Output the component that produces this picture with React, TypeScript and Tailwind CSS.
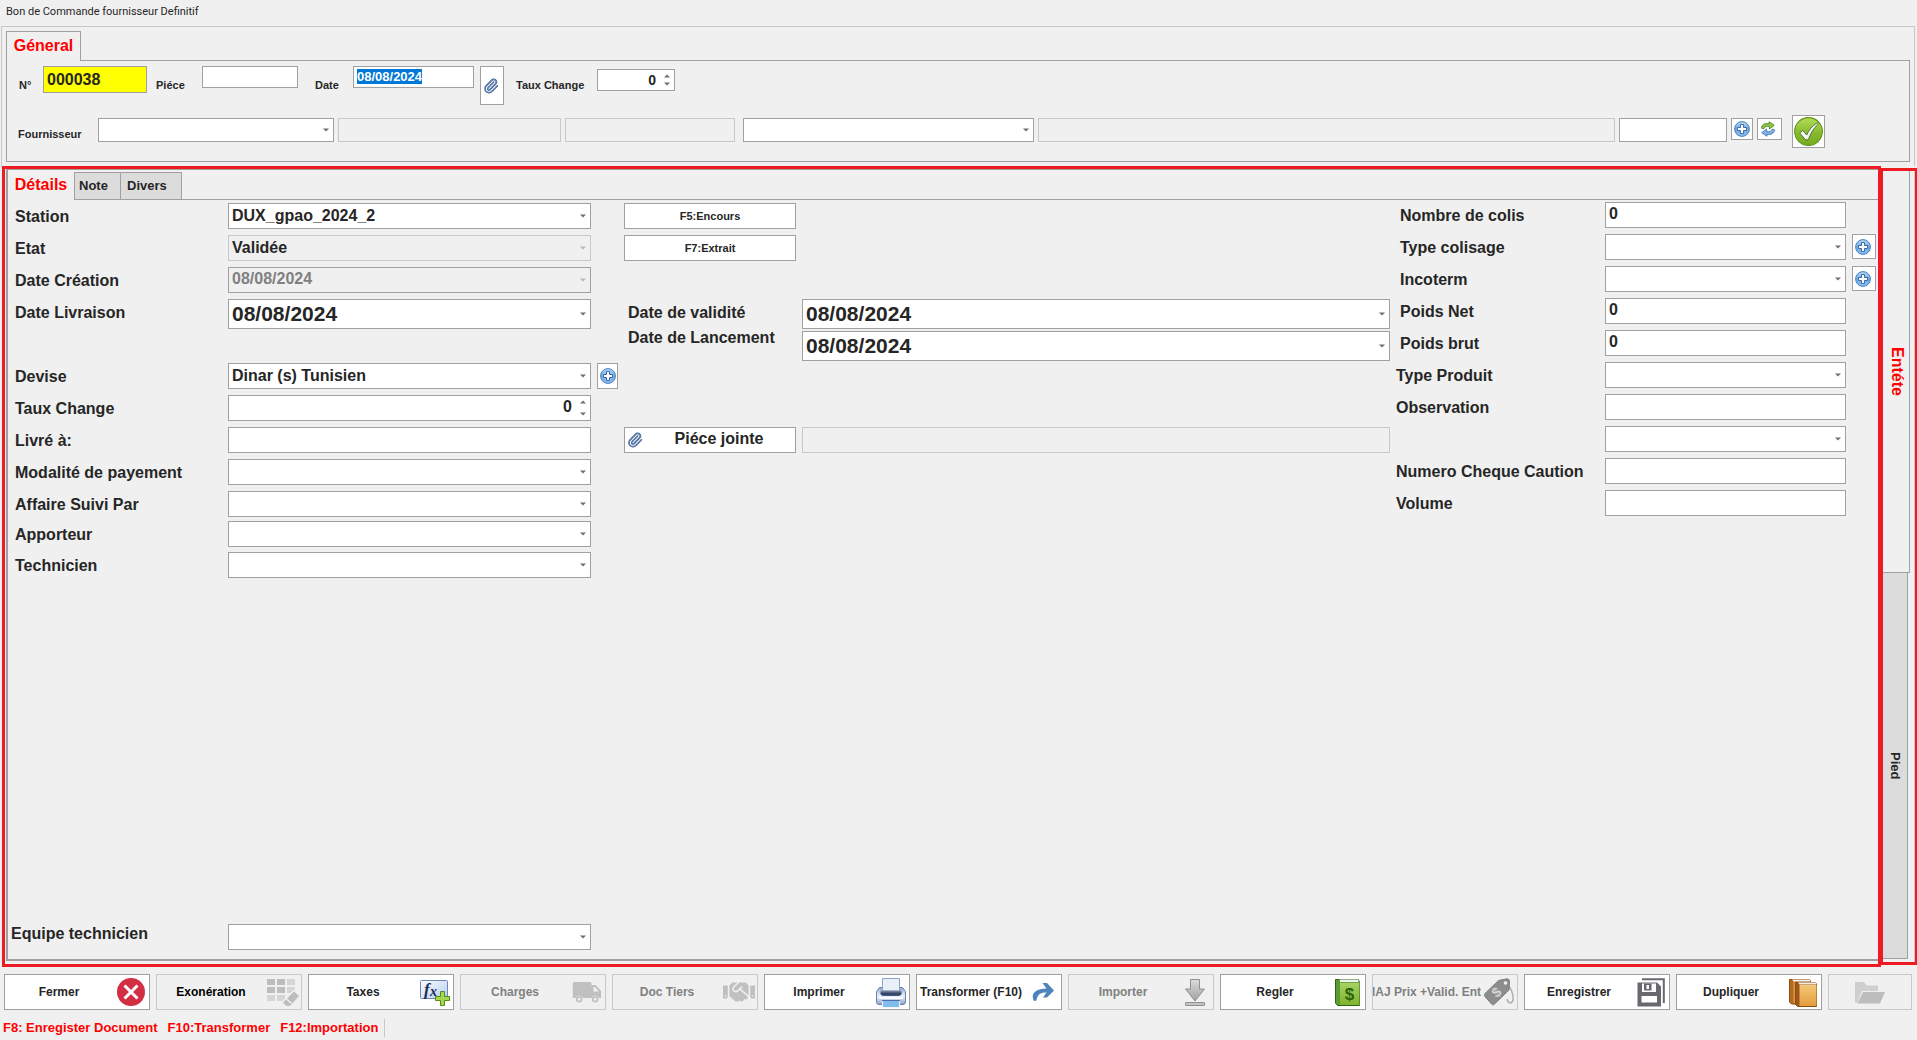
import { useEffect, useRef, type ReactNode } from "react";
import { Paperclip as ClipGlyph } from "lucide-react";
import { FaHandshake } from "react-icons/fa";

/* ---------- icons ---------- */

function Paperclip() {
  return (
    <span className="relative block size-4 shrink-0">
      <ClipGlyph className="size-4 text-[#2f558f]" strokeWidth={2.4} aria-hidden="true" />
      <ClipGlyph className="absolute inset-0 size-4 text-[#b4c8e6]" strokeWidth={0.7} aria-hidden="true" />
    </span>
  );
}

function PlusCircle() {
  return (
    <svg viewBox="0 0 16 16" className="size-4 shrink-0" aria-hidden="true">
      <defs>
        <linearGradient id="plusFill" x1="0" y1="0" x2="0" y2="1">
          <stop offset="0" stopColor="#b9dcf5" />
          <stop offset="0.5" stopColor="#6fa8dc" />
          <stop offset="1" stopColor="#8cc4f0" />
        </linearGradient>
      </defs>
      <circle cx="8" cy="8" r="7.4" fill="url(#plusFill)" stroke="#4a7dbf" />
      <path d="M6.500 3.500h3v3h3v3h-3v3h-3v-3h-3v-3h3z" fill="#fff" stroke="#2f5fa5" strokeWidth="0.9" strokeLinejoin="round" />
    </svg>
  );
}

function Refresh() {
  return (
    <svg viewBox="0 0 16 16" className="size-4 shrink-0" strokeLinejoin="round" strokeWidth="0.8" aria-hidden="true">
      <path d="M1.500 7.200C1.700 3.800 5 1.700 9 2.800V.7l5.300 3.600L9.400 8V5.700C6.700 4.700 4.600 5.500 3.800 7.800z" fill="#8cc63f" stroke="#4b7d1a" />
      <path d="M14.500 8.800c-.2 3.400-3.500 5.500-7.500 4.400v2.100L1.700 11.700 6.600 8v2.300c2.700 1 4.800.2 5.600-2.100z" fill="#7db4e6" stroke="#3a6fb0" />
    </svg>
  );
}

function CheckCircle() {
  return (
    <svg viewBox="0 0 28 28" className="size-[29px] shrink-0" aria-hidden="true">
      <defs>
        <linearGradient id="checkFill" x1="0" y1="0" x2="0" y2="1">
          <stop offset="0" stopColor="#b5dc5a" />
          <stop offset="0.55" stopColor="#86bb2c" />
          <stop offset="1" stopColor="#76ab22" />
        </linearGradient>
      </defs>
      <circle cx="14" cy="14" r="13.4" fill="url(#checkFill)" stroke="#5f931a" />
      <path
        d="M5.500 15.500 8.500 13l3.800 4.400C14.300 12.700 17.600 8.500 22.500 5.500l1 1.200c-4.500 4-7.500 8.800-9.700 15.300h-2.600z"
        fill="#f4f8f0"
        stroke="#4f6b3a"
        strokeWidth="0.9"
        strokeLinejoin="round"
      />
    </svg>
  );
}

function CloseIcon() {
  return (
    <svg viewBox="0 0 28 28" className="size-7" aria-hidden="true">
      <circle cx="14" cy="14" r="14" fill="#d22f45" />
      <path d="m7.500 7.500 13 13m0-13-13 13" stroke="#fff" strokeWidth="3" />
    </svg>
  );
}

function GridEraser() {
  return (
    <svg viewBox="0 0 34 30" className="h-[30px] w-[34px]" aria-hidden="true">
      <g fill="#bdbdbd">
        <path d="M1 2h8v6H1zM11 2h8v6h-8zM1 10h8v6H1zM11 10h8v6h-8z" />
      </g>
      <g fill="#d6d6d6">
        <path d="M21 2h8v6h-8zM21 10h8v6h-8zM1 18h8v6H1zM11 18h8v6h-8z" />
      </g>
      <path d="m28 13.500 6 5.500-9.500 10.500h-4.500l-4-4z" fill="#bdbdbd" stroke="#f0f0f0" strokeWidth="1.5" />
      <path d="m19.500 21 6 5.500" stroke="#f0f0f0" strokeWidth="1.5" />
    </svg>
  );
}

function FormulaIcon() {
  return (
    <svg viewBox="0 0 32 30" className="h-[30px] w-8" aria-hidden="true">
      <defs>
        <linearGradient id="fxFill" x1="0" y1="0" x2="1" y2="1">
          <stop offset="0" stopColor="#fbfdff" />
          <stop offset="1" stopColor="#b4cdf2" />
        </linearGradient>
      </defs>
      <rect x="1.5" y="3.5" width="27" height="18" rx="1" fill="url(#fxFill)" stroke="#6e87b5" />
      <text x="5" y="18" fontSize="17" fontStyle="italic" fontWeight="bold" fontFamily="Liberation Serif, serif" fill="#1c2b50">
        f
      </text>
      <text x="11" y="19" fontSize="14" fontStyle="italic" fontWeight="bold" fontFamily="Liberation Serif, serif" fill="#1c2b50">
        x
      </text>
      <path d="M21.500 14.500h4v5h5v4h-5v5h-4v-5h-5v-4h5z" fill="#a8d84a" stroke="#4f8a1a" strokeLinejoin="round" />
    </svg>
  );
}

function Truck() {
  return (
    <svg viewBox="0 0 30 22" className="h-[22px] w-[30px]" fill="#c0c0c0" aria-hidden="true">
      <path d="M2 1h16a1.500 1.500 0 0 1 1.500 1.500V4h4.300l5.200 6v7h-2a4 4 0 0 0-7.500 0H11a4 4 0 0 0-7.500 0H.8V2.500A1.500 1.500 0 0 1 2 1zm19.500 5v4.500h5.300L23 6z" fillRule="evenodd" />
      <path d="M7.200 15a3.300 3.300 0 1 1 0 6.600 3.300 3.300 0 0 1 0-6.600zm0 1.800a1.500 1.500 0 1 0 0 3 1.500 1.500 0 0 0 0-3zM23.200 15a3.300 3.300 0 1 1 0 6.600 3.300 3.300 0 0 1 0-6.600zm0 1.800a1.500 1.500 0 1 0 0 3 1.500 1.500 0 0 0 0-3z" fillRule="evenodd" />
    </svg>
  );
}

function Handshake() {
  return <FaHandshake className="size-8 text-[#c0c0c0]" aria-hidden="true" />;
}

function Printer() {
  return (
    <svg viewBox="0 0 30 31" className="h-[31px] w-[30px]" aria-hidden="true">
      <defs>
        <linearGradient id="printBody" x1="0" y1="0" x2="0" y2="1">
          <stop offset="0" stopColor="#8fa6cf" />
          <stop offset="0.5" stopColor="#eef3fb" />
          <stop offset="1" stopColor="#8ba0ca" />
        </linearGradient>
        <linearGradient id="printRoll" x1="0" y1="0" x2="0" y2="1">
          <stop offset="0" stopColor="#8f9cb5" />
          <stop offset="0.6" stopColor="#2c3c60" />
          <stop offset="1" stopColor="#4c5d85" />
        </linearGradient>
      </defs>
      <path d="M3.500 10.500h23l3 4V25c0 1.500-1 2.500-2.500 2.500H3C1.500 27.500.5 26.500.5 25V14.500z" fill="url(#printBody)" stroke="#6a80ad" />
      <path d="M6.500 1.500h17V14h-17z" fill="#e9f0fa" stroke="#8ea3c8" />
      <path d="M4.500 13.500h21v3c0 1.500-1.500 2.500-3 2.500h-15c-1.500 0-3-1-3-2.500z" fill="url(#printRoll)" />
      <path d="M3 20h24v2H3z" fill="#f7faff" />
      <path d="M6.500 23.500h17v7h-17z" fill="#7fbdee" stroke="#f2f6fc" />
      <path d="M6 23.500h18" stroke="#4f6ea5" />
    </svg>
  );
}

function RedoArrow() {
  return (
    <svg viewBox="0 0 22 18" className="h-[18px] w-[22px]" aria-hidden="true">
      <path d="M10.500 0h4.500l7 7.500-7 7h-4l3.500-5C9 9.500 5.500 11 4.500 17.500L2 18C-1.500 12 2 5.500 14.500 5.500z" fill="#4d84bd" />
    </svg>
  );
}

function DownloadArrow() {
  return (
    <svg viewBox="0 0 22 30" className="h-[30px] w-[22px]" stroke="#909090" strokeLinejoin="round" aria-hidden="true">
      <defs>
        <linearGradient id="downFill" x1="0" y1="0" x2="0" y2="1">
          <stop offset="0" stopColor="#dcdcdc" />
          <stop offset="1" stopColor="#a0a0a0" />
        </linearGradient>
      </defs>
      <path d="M6.500 2.500h9V12h5L11 24 1.500 12h5z" fill="url(#downFill)" />
      <rect x="1.5" y="25.5" width="19" height="3" rx="0.5" fill="#c4c4c4" />
    </svg>
  );
}

function MoneyBook() {
  return (
    <svg viewBox="0 0 25 28" className="h-7 w-[25px]" aria-hidden="true">
      <defs>
        <linearGradient id="bookGreen" x1="0" y1="0" x2="0" y2="1">
          <stop offset="0" stopColor="#a7d264" />
          <stop offset="1" stopColor="#7fb52e" />
        </linearGradient>
      </defs>
      <path d="M.5 1.500h23l1 3v23H2.500l-2-2.500z" fill="#3f7a22" stroke="#2f6318" />
      <path d="M4 1.500h19.500V4H5z" fill="#eef3f4" />
      <path d="M1 2h4v25H2.500L1 25z" fill="#5c9a34" />
      <path d="M5 4.500h19.500V27H5z" fill="url(#bookGreen)" />
      <text x="14.5" y="22" textAnchor="middle" fontSize="17" fontWeight="bold" fontFamily="Liberation Sans, sans-serif" fill="#2b6410">
        $
      </text>
    </svg>
  );
}

function PriceTag() {
  return (
    <svg viewBox="0 0 30 28" className="h-7 w-[30px]" aria-hidden="true">
      <path d="M22 6c4 2 8 10 7 16-1 4-5 4-6-1" fill="none" stroke="#b0b0b0" strokeWidth="1.5" />
      <path d="M14.500 2.500 23 .8c1.500 0 2.500 1 2.500 2.500L25 12 10.500 26c-1 1-2 1-3 0L1 18.500c-1-1-1-2 0-3z" fill="#8d8d8d" stroke="#7c7c7c" />
      <circle cx="21.5" cy="5" r="1.8" fill="#f0f0f0" />
      <text x="12.5" y="19" textAnchor="middle" fontSize="14" fontWeight="bold" fontFamily="Liberation Sans, sans-serif" fill="#d4d4d4" transform="rotate(-40 12.5 14.5)">
        $
      </text>
    </svg>
  );
}

function SaveAll() {
  return (
    <svg viewBox="0 0 28 29" className="h-[29px] w-7" aria-hidden="true">
      <path d="M5 1.200h21.800V25" fill="none" stroke="#68686f" strokeWidth="2" />
      <path d="M.5 4.500H20l4 4V28.500H.5zM5 5.500v8.500h14V5.500zM4.500 18v6.500h15.500V18z" fill="#68686f" fillRule="evenodd" />
      <path d="M7 5.500h7.500v7H7zM9.500 7v4h2.500V7z" fill="#68686f" fillRule="evenodd" />
    </svg>
  );
}

function Books() {
  return (
    <svg viewBox="0 0 28 29" className="h-[29px] w-7" aria-hidden="true">
      <defs>
        <linearGradient id="bookGold" x1="0" y1="0" x2="0" y2="1">
          <stop offset="0" stopColor="#f3c878" />
          <stop offset="1" stopColor="#e39c3c" />
        </linearGradient>
      </defs>
      <path d="M.5 1.500h20l1 2V26H2.500L.5 24z" fill="#b56a1f" stroke="#8d4c12" />
      <path d="M3 1.500h18v2H4.500z" fill="#f4efe8" />
      <path d="M4.500 4H21v21H4.500z" fill="#dd9a45" />
      <path d="M6.500 4.500h20l1 2v22h-19l-2-2z" fill="#a0551a" stroke="#8d4c12" />
      <path d="M9 4.500h18v2H10.500z" fill="#f4efe8" />
      <path d="M10.500 7h17v21h-17z" fill="url(#bookGold)" />
    </svg>
  );
}

function FolderOpen() {
  return (
    <svg viewBox="0 0 30 23" className="h-[23px] w-[30px]" aria-hidden="true">
      <path d="M0 1h9l2.500 3.500H23V10H7L2.500 22H0z" fill="#cfcfcf" />
      <path d="M8 11h22l-5 11.500H2.500z" fill="#bdbdbd" />
    </svg>
  );
}

/* ---------- fields ---------- */

type FieldSkin = "normal" | "readonly" | "disabled";

const skins: Record<FieldSkin, string> = {
  normal: "border-[#a0a0a0] bg-white text-[#262626]",
  readonly: "border-[#a0a0a0] bg-[#f0f0f0] text-[#808080]",
  disabled: "border-[#c8c8c8] bg-[#f0f0f0] text-[#262626]",
};

function Arrow({ faded = false, up = false }: { faded?: boolean; up?: boolean }) {
  return (
    <svg viewBox="0 0 6 4" className="h-1 w-1.5" fill={faded ? "#b8b8b8" : "#6e6e6e"} aria-hidden="true">
      <path d={up ? "M0 3.500 3 .5l3 3z" : "M0 .5h6l-3 3z"} />
    </svg>
  );
}

interface FieldProps {
  id: string;
  value?: string;
  label?: string;
  skin?: FieldSkin;
  size?: string;
}

const fieldBase = "block w-full border pl-[3px] outline-none";

function TextField({ id, value = "", label, skin = "normal", size = "h-[26px] text-[16px] pb-0.5" }: FieldProps) {
  return (
    <input
      id={id}
      aria-label={label}
      defaultValue={value}
      readOnly={skin !== "normal"}
      className={`${fieldBase} ${skins[skin]} ${size}`}
    />
  );
}

function SelectField({ id, value = "", label, skin = "normal", size = "h-[26px] text-[16px] pb-1" }: FieldProps) {
  return (
    <div className="relative w-full">
      <select
        id={id}
        aria-label={label}
        defaultValue={value}
        disabled={skin !== "normal"}
        className={`${fieldBase} appearance-none rounded-none opacity-100 ${skins[skin]} ${size}`}
      >
        <option value={value}>{value}</option>
      </select>
      <span className="pointer-events-none absolute inset-y-0 right-[5px] flex items-center">
        <Arrow faded={skin !== "normal"} />
      </span>
    </div>
  );
}

function DateField({ id, value = "", skin = "normal", size = "h-[30px] text-[21px]" }: FieldProps) {
  return (
    <div className="relative w-full">
      <TextField id={id} value={value} skin={skin} size={size} />
      <button type="button" aria-label="Ouvrir le calendrier" className="absolute inset-y-0 right-[5px] flex items-center">
        <Arrow faded={skin !== "normal"} />
      </button>
    </div>
  );
}

function SpinField({ id, value = "0", size = "h-[26px] text-[16px] pb-0.5" }: FieldProps) {
  return (
    <div className="relative w-full">
      <input id={id} defaultValue={value} inputMode="decimal" className={`${fieldBase} pr-[18px] text-right ${skins.normal} ${size}`} />
      <span className="absolute inset-y-0 right-[5px] flex flex-col justify-between py-[5px]">
        <button type="button" aria-label="Augmenter" className="block">
          <Arrow up />
        </button>
        <button type="button" aria-label="Diminuer" className="block">
          <Arrow />
        </button>
      </span>
    </div>
  );
}

function IconButton({ label, className, children }: { label: string; className: string; children: ReactNode }) {
  return (
    <button type="button" aria-label={label} className={`flex shrink-0 items-center justify-center border border-[#a0a0a0] bg-white ${className}`}>
      {children}
    </button>
  );
}

function Row({ id, label, height = "h-8", children }: { id: string; label: string; height?: string; children: ReactNode }) {
  return (
    <div className={`flex items-start ${height}`}>
      <label htmlFor={id} className="flex h-7 flex-1 items-center whitespace-nowrap">
        {label}
      </label>
      {children}
    </div>
  );
}

/* ---------- sections ---------- */

const smallField = "h-[22px] text-[13px] pb-1";
const supplierField = "h-6 text-[13px]";

function General() {
  const dateRef = useRef<HTMLInputElement>(null);
  useEffect(() => {
    dateRef.current?.focus();
    dateRef.current?.select();
  }, []);

  return (
    <section className="ml-px mr-0.5 border-x border-t border-[#c8c8c8] pb-1 pl-1 pr-1 pt-1">
      <div className="flex items-end" role="tablist">
        <button type="button" role="tab" aria-selected="true" className="h-[30px] w-[75px] border-l border-r border-t border-[#a0a0a0] pb-0.5 text-[16px] text-[#ff0000]">
          Géneral
        </button>
        <div className="flex-1 border-b border-[#a0a0a0]" />
      </div>
      <div className="border-x border-b border-[#a0a0a0] pb-[13px] pt-[5px] text-[11px]">
        <div className="flex items-start">
          <label htmlFor="numero" className="w-9 pl-3 pt-[11px] leading-4">
            N°
          </label>
          <div className="w-[104px]">
            <input id="numero" defaultValue="000038" className="block h-[27px] w-full border border-[#a0a0a0] bg-[#ffff00] pl-[3px] text-[16px] outline-none" />
          </div>
          <label htmlFor="piece" className="w-[55px] pl-[9px] pt-[11px] leading-4">
            Piéce
          </label>
          <div className="w-24">
            <TextField id="piece" size={smallField} />
          </div>
          <label htmlFor="date" className="w-[55px] pl-[17px] pt-[11px] leading-4">
            Date
          </label>
          <div className="w-[121px]">
            <input
              id="date"
              ref={dateRef}
              defaultValue="08/08/2024"
              className="block h-[22px] w-full border border-[#a0a0a0] bg-white pb-0.5 pl-[3px] text-[13px] outline-none selection:bg-[#0078d7] selection:text-white"
            />
          </div>
          <IconButton label="Joindre un fichier" className="ml-1.5 h-[39px] w-6 pr-0.5">
            <Paperclip />
          </IconButton>
          <label htmlFor="taux" className="w-[93px] pl-3 pt-[11px] leading-4">
            Taux Change
          </label>
          <div className="w-[78px] pt-[3px]">
            <SpinField id="taux" size="h-[22px] text-[14px]" />
          </div>
        </div>
        <div className="mt-2.5 flex items-start gap-1 pr-[84px]">
          <label htmlFor="fournisseur" className="w-[87px] pl-[11px] pt-[11px] leading-4">
            Fournisseur
          </label>
          <div className="w-[236px] pt-[3px]">
            <SelectField id="fournisseur" size={supplierField} />
          </div>
          <div className="w-[223px] pt-[3px]">
            <TextField id="f-nom" label="Nom du fournisseur" skin="disabled" size={supplierField} />
          </div>
          <div className="w-[170px] pt-[3px]">
            <TextField id="f-mat" label="Matricule fiscal" skin="disabled" size={supplierField} />
          </div>
          <div className="ml-1 w-[291px] pt-[3px]">
            <SelectField id="f-contact" label="Contact" size={supplierField} />
          </div>
          <div className="flex-1 pt-[3px]">
            <TextField id="f-adresse" label="Adresse" skin="disabled" size={supplierField} />
          </div>
          <div className="w-[108px] pt-[3px]">
            <TextField id="f-ref" label="Référence" size={supplierField} />
          </div>
          <IconButton label="Ajouter un fournisseur" className="mt-[3px] size-[22px]">
            <PlusCircle />
          </IconButton>
          <IconButton label="Actualiser" className="mt-[3px] h-[22px] w-[25px] pr-1">
            <Refresh />
          </IconButton>
          <IconButton label="Valider" className="ml-1.5 size-[33px]">
            <CheckCircle />
          </IconButton>
        </div>
      </div>
    </section>
  );
}

function Details() {
  return (
    <section className="flex min-w-0 flex-1 flex-col border-[3px] border-[#ed1c24] pb-[3px] pl-px">
      <div className="flex flex-1 flex-col border-b-2 border-l-2 border-t border-[#a0a0a0]">
        <div className="flex items-end text-[13px]" role="tablist">
          <button type="button" role="tab" aria-selected="true" className="h-[30px] w-[66px] text-[16px] text-[#ff0000]">
            Détails
          </button>
          <button type="button" role="tab" aria-selected="false" className="h-7 w-[47px] border border-[#a0a0a0] bg-[#dcdcdc] pl-1 text-left">
            Note
          </button>
          <button type="button" role="tab" aria-selected="false" className="h-7 w-[61px] border-y border-r border-[#a0a0a0] bg-[#dcdcdc] pl-1.5 text-left">
            Divers
          </button>
          <div className="h-px flex-1 bg-[#a0a0a0]" />
        </div>

        <div className="flex pr-0.5 pt-0.5 text-[16px]">
          <div className="flex w-[583px] flex-col pl-[7px] pt-px">
            <Row id="station" label="Station">
              <div className="w-[363px]">
                <SelectField id="station" value="DUX_gpao_2024_2" />
              </div>
            </Row>
            <Row id="etat" label="Etat">
              <div className="w-[363px]">
                <SelectField id="etat" value="Validée" skin="disabled" />
              </div>
            </Row>
            <Row id="creation" label="Date Création">
              <div className="w-[363px]">
                <DateField id="creation" value="08/08/2024" skin="readonly" size="h-[26px] text-[16px] pb-0.5" />
              </div>
            </Row>
            <Row id="livraison" label="Date Livraison" height="h-16">
              <div className="w-[363px]">
                <DateField id="livraison" value="08/08/2024" />
              </div>
            </Row>
            <Row id="devise" label="Devise">
              <div className="w-[363px]">
                <SelectField id="devise" value="Dinar (s) Tunisien" />
              </div>
            </Row>
            <Row id="taux-change" label="Taux Change">
              <div className="w-[363px]">
                <SpinField id="taux-change" />
              </div>
            </Row>
            <Row id="livre" label="Livré à:">
              <div className="w-[363px]">
                <TextField id="livre" />
              </div>
            </Row>
            <Row id="modalite" label="Modalité de payement">
              <div className="w-[363px]">
                <SelectField id="modalite" />
              </div>
            </Row>
            <Row id="affaire" label="Affaire Suivi Par" height="h-[30px]">
              <div className="w-[363px]">
                <SelectField id="affaire" />
              </div>
            </Row>
            <Row id="apporteur" label="Apporteur" height="h-[31px]">
              <div className="w-[363px]">
                <SelectField id="apporteur" />
              </div>
            </Row>
            <Row id="technicien" label="Technicien">
              <div className="w-[363px]">
                <SelectField id="technicien" />
              </div>
            </Row>
          </div>

          <div className="flex min-w-0 flex-1 flex-col pt-px">
            <div className="ml-[33px] flex h-24 w-[172px] flex-col gap-1.5 text-[11px]">
              <button type="button" className="h-[26px] border border-[#a0a0a0] bg-white">
                F5:Encours
              </button>
              <button type="button" className="h-[26px] border border-[#a0a0a0] bg-white">
                F7:Extrait
              </button>
            </div>
            <div className="flex h-16 items-start pl-[37px]">
              <div className="flex w-[174px] flex-col pt-px leading-[25px]">
                <label htmlFor="validite">Date de validité</label>
                <label htmlFor="lancement">Date de Lancement</label>
              </div>
              <div className="flex flex-1 flex-col gap-0.5">
                <DateField id="validite" value="08/08/2024" />
                <DateField id="lancement" value="08/08/2024" />
              </div>
            </div>
            <div className="h-16 pl-1.5">
              <IconButton label="Ajouter une devise" className="h-[26px] w-[21px]">
                <PlusCircle />
              </IconButton>
            </div>
            <div className="flex gap-1.5 pl-[33px]">
              <button type="button" className="flex h-[26px] w-[172px] items-center border border-[#a0a0a0] bg-white pl-0.5">
                <Paperclip />
                <span className="flex-1 pb-0.5">Piéce jointe</span>
              </button>
              <div className="flex-1">
                <TextField id="piece-jointe" label="Fichier joint" skin="disabled" />
              </div>
            </div>
          </div>

          <div className="flex w-[486px] flex-col">
            <div className="flex flex-col pl-2.5">
              <Row id="colis" label="Nombre de colis">
                <div className="mr-[30px] w-[241px]">
                  <TextField id="colis" value="0" />
                </div>
              </Row>
              <Row id="colisage" label="Type colisage">
                <div className="w-[241px]">
                  <SelectField id="colisage" />
                </div>
                <IconButton label="Ajouter un type de colisage" className="ml-1.5 h-[25px] w-6 pr-0.5">
                  <PlusCircle />
                </IconButton>
              </Row>
              <Row id="incoterm" label="Incoterm">
                <div className="w-[241px]">
                  <SelectField id="incoterm" />
                </div>
                <IconButton label="Ajouter un incoterm" className="ml-1.5 h-[25px] w-6 pr-0.5">
                  <PlusCircle />
                </IconButton>
              </Row>
              <Row id="poids-net" label="Poids Net">
                <div className="mr-[30px] w-[241px]">
                  <TextField id="poids-net" value="0" />
                </div>
              </Row>
              <Row id="poids-brut" label="Poids brut">
                <div className="mr-[30px] w-[241px]">
                  <TextField id="poids-brut" value="0" />
                </div>
              </Row>
            </div>
            <div className="flex flex-col pl-1.5 pr-[30px]">
              <Row id="produit" label="Type Produit">
                <div className="w-[241px]">
                  <SelectField id="produit" />
                </div>
              </Row>
              <Row id="observation" label="Observation">
                <div className="w-[241px]">
                  <TextField id="observation" />
                </div>
              </Row>
              <div className="flex h-8 justify-end">
                <div className="w-[241px]">
                  <SelectField id="observation-type" label="Type d'observation" />
                </div>
              </div>
              <Row id="cheque" label="Numero Cheque Caution">
                <div className="w-[241px]">
                  <TextField id="cheque" />
                </div>
              </Row>
              <Row id="volume" label="Volume">
                <div className="w-[241px]">
                  <TextField id="volume" />
                </div>
              </Row>
            </div>
          </div>
        </div>

        <div className="mt-auto flex items-start pb-[9px] pl-[3px] text-[16px]">
          <label htmlFor="equipe" className="w-[217px] leading-5">
            Equipe technicien
          </label>
          <div className="w-[363px]">
            <SelectField id="equipe" />
          </div>
        </div>
      </div>
    </section>
  );
}

function SideTabs() {
  return (
    <aside className="my-0.5 flex w-9 flex-col border-y-[3px] border-l-2 border-r-2 border-[#ed1c24]">
      <div className="flex flex-1 flex-col border-r border-[#c8c8c8] pb-[3px] pr-1" role="tablist" aria-orientation="vertical">
        <button type="button" role="tab" aria-selected="true" className="flex w-full flex-[51] items-center justify-center border-b border-r border-[#a0a0a0] pl-0.5 text-[16px] leading-5 text-[#ff0000]">
          <span className="[writing-mode:vertical-rl]">Entéte</span>
        </button>
        <div className="flex flex-[49] pr-0.5">
          <button type="button" role="tab" aria-selected="false" className="flex flex-1 items-center justify-center border-b border-r border-[#a0a0a0] bg-[#dcdcdc] text-[13px] leading-5">
            <span className="[writing-mode:vertical-rl]">Pied</span>
          </button>
        </div>
      </div>
    </aside>
  );
}

interface Action {
  label: string;
  icon: ReactNode;
  state: "on" | "off" | "muted";
  clipStart?: boolean;
}

const actions: Action[] = [
  { label: "Fermer", icon: <CloseIcon />, state: "on" },
  { label: "Exonération", icon: <GridEraser />, state: "muted" },
  { label: "Taxes", icon: <FormulaIcon />, state: "on" },
  { label: "Charges", icon: <Truck />, state: "off" },
  { label: "Doc Tiers", icon: <Handshake />, state: "off" },
  { label: "Imprimer", icon: <Printer />, state: "on" },
  { label: "Transformer (F10)", icon: <RedoArrow />, state: "on" },
  { label: "Importer", icon: <DownloadArrow />, state: "off" },
  { label: "Regler", icon: <MoneyBook />, state: "on" },
  { label: "MAJ Prix +Valid. Ent", icon: <PriceTag />, state: "off", clipStart: true },
  { label: "Enregistrer", icon: <SaveAll />, state: "on" },
  { label: "Dupliquer", icon: <Books />, state: "on" },
];

const actionSkins: Record<Action["state"], string> = {
  on: "border-[#a0a0a0] bg-white text-[#262626]",
  off: "border-[#c8c8c8] text-[#808080]",
  muted: "border-[#c8c8c8] text-black",
};

function Toolbar() {
  return (
    <nav className="grid grid-cols-[repeat(12,146fr)_84fr] gap-1.5 pl-1 pr-[5px] pt-[7px]">
      {actions.map((a) => (
        <button
          key={a.label}
          type="button"
          disabled={a.state === "off"}
          className={`flex h-9 min-w-0 items-center border text-[12px] ${actionSkins[a.state]}`}
        >
          <span className={`flex min-w-0 flex-1 overflow-hidden whitespace-nowrap ${a.clipStart ? "justify-end" : "justify-center"}`}>
            {a.label}
          </span>
          <span className="flex w-9 shrink-0 items-center justify-center">{a.icon}</span>
        </button>
      ))}
      <button type="button" disabled aria-label="Ouvrir" className="flex h-9 items-center justify-center border border-[#c8c8c8]">
        <FolderOpen />
      </button>
    </nav>
  );
}

export default function App() {
  return (
    <div className="flex min-h-screen flex-col bg-[#f0f0f0] font-['Liberation_Sans',Arial,sans-serif] font-bold text-[#262626]">
      <h1 className="h-[26px] pl-1.5 font-['Roboto','Open_Sans',sans-serif] text-[11px] font-normal leading-6">
        Bon de Commande fournisseur Definitif
      </h1>
      <General />
      <main className="flex flex-1 pl-0.5">
        <Details />
        <SideTabs />
      </main>
      <Toolbar />
      <footer className="flex pb-[3px] pl-[3px] pt-[9px] text-[13px] leading-[18px] text-[#ff0000]">
        <p className="flex gap-2.5 border-r border-[#c8c8c8] pr-1.5">
          <span>F8: Enregister Document</span>
          <span>F10:Transformer</span>
          <span>F12:Importation</span>
        </p>
      </footer>
    </div>
  );
}
